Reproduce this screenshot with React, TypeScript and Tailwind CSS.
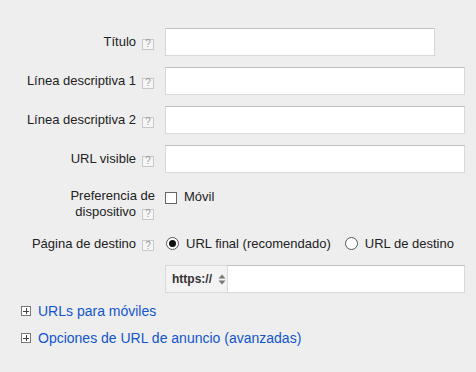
import React from "react";

function Help() {
  return (
    <span className="inline-flex items-center justify-center w-[12px] h-[11px] border border-[#c8c8c8] bg-[#f6f6f6] text-[10px] leading-none text-[#999] ml-[6px] mr-[1px] align-[-1px]">
      ?
    </span>
  );
}

function Input({ w }: { w: string }) {
  return (
    <div
      className={`${w} h-[28px] bg-white border border-[#d9d9d9] border-t-[#c0c0c0]`}
    />
  );
}

function Row({
  label,
  children,
  className = "",
}: {
  label: React.ReactNode;
  children: React.ReactNode;
  className?: string;
}) {
  return (
    <div className={`flex ${className}`}>
      <div className="w-[155px] shrink-0 flex items-center justify-end text-right">
        {label}
      </div>
      <div className="ml-[10px] flex items-center">{children}</div>
    </div>
  );
}

function Radio({ checked }: { checked?: boolean }) {
  return (
    <span className="inline-flex items-center justify-center w-[13px] h-[13px] rounded-full border border-[#555] bg-white">
      {checked && <span className="w-[7px] h-[7px] rounded-full bg-[#111]" />}
    </span>
  );
}

function PlusBox() {
  return (
    <span className="relative inline-block w-[10px] h-[10px] border border-[#777] bg-white">
      <span className="absolute left-[1px] right-[1px] top-[3.5px] h-[1px] bg-[#444]" />
      <span className="absolute top-[1px] bottom-[1px] left-[3.5px] w-[1px] bg-[#444]" />
    </span>
  );
}

export default function App() {
  return (
    <div
      className="min-h-[372px] w-[476px] bg-[#eeeeee] text-[13px] text-[#222] pt-[28px]"
      style={{ fontFamily: "Arial, 'Liberation Sans', sans-serif" }}
    >
      <Row label={<span>Título<Help /></span>}>
        <Input w="w-[270px]" />
      </Row>
      <Row className="mt-[11px]" label={<span>Línea descriptiva 1<Help /></span>}>
        <Input w="w-[300px]" />
      </Row>
      <Row className="mt-[11px]" label={<span>Línea descriptiva 2<Help /></span>}>
        <Input w="w-[300px]" />
      </Row>
      <Row className="mt-[11px]" label={<span>URL visible<Help /></span>}>
        <Input w="w-[300px]" />
      </Row>

      <div className="flex mt-[15px]">
        <div className="w-[155px] shrink-0 text-right leading-[16px]">
          Preferencia de
          <br />
          dispositivo<Help />
        </div>
        <div className="ml-[10px] flex items-start h-[16px]">
          <div className="flex items-center h-[16px] gap-[7px]">
            <span className="inline-block w-[12px] h-[12px] border border-[#666] bg-white mt-[3px]" />
            <span className="mt-[1px]">Móvil</span>
          </div>
        </div>
      </div>

      <div className="flex mt-[15px] h-[17px]">
        <div className="w-[155px] shrink-0 flex items-center justify-end">
          <span>Página de destino<Help /></span>
        </div>
        <div className="ml-[11px] flex items-center">
          <Radio checked />
          <span className="ml-[7px]">URL final (recomendado)</span>
          <span className="ml-[14px] flex items-center">
            <Radio />
            <span className="ml-[7px]">URL de destino</span>
          </span>
        </div>
      </div>

      <div className="flex mt-[13px]">
        <div className="w-[155px] shrink-0" />
        <div className="ml-[10px] flex h-[28px] w-[300px]">
          <div className="w-[62px] h-full flex items-center pl-[6px] bg-[#f3f3f3] border border-[#d9d9d9] border-r-0 text-[12px] font-bold text-[#333]">
            https://
            <svg width="8" height="11" viewBox="0 0 8 11" className="ml-[6px]">
              <path d="M4 0.5 L7.5 4.5 H0.5 Z" fill="#777" />
              <path d="M4 10.5 L7.5 6.5 H0.5 Z" fill="#777" />
            </svg>
          </div>
          <div className="flex-1 h-full bg-white border border-[#d9d9d9] border-t-[#c0c0c0]" />
        </div>
      </div>

      <div className="mt-[9px] pl-[21px] text-[14px] leading-[18px] text-[#1155cc]">
        <div className="flex items-center gap-[7px]">
          <PlusBox />
          <span>URLs para móviles</span>
        </div>
        <div className="flex items-center gap-[7px] mt-[9px]">
          <PlusBox />
          <span>Opciones de URL de anuncio (avanzadas)</span>
        </div>
      </div>
    </div>
  );
}
